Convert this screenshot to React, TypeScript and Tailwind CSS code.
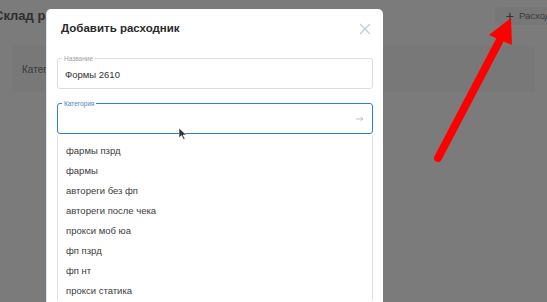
import React from "react";

const items = [
  "фармы пзрд",
  "фармы",
  "автореги без фп",
  "автореги после чека",
  "прокси моб юа",
  "фп пзрд",
  "фп нт",
  "прокси статика",
];

export default function App() {
  return (
    <div
      className="relative w-[547px] h-[302px] overflow-hidden bg-[#7b7b7b]"
      style={{ fontFamily: "'Liberation Sans', Arial, sans-serif" }}
    >
      {/* background page */}
      <div className="flex items-center justify-between h-[36px]">
        <div className="-ml-[6px] text-[13px] font-bold text-[#2f2f2f] mt-[-4px] whitespace-nowrap">Склад расходников</div>
        <div className="flex items-center gap-[5px] h-[18px] mt-[-4px] pl-[11px] pr-[4px] rounded-[3px] bg-[#777777] text-[9.5px] text-[#3a3a3a] -mr-[22px] whitespace-nowrap">
          <span className="text-[14px] leading-none text-[#333]">+</span>
          <span>Расходник</span>
        </div>
      </div>
      <div className="mx-[12px] mt-[10px] h-[46px] rounded-[3px] bg-[#787878] flex items-center pl-[10px] text-[10px] text-[#3a3a3a]">
        Категория
      </div>

      {/* modal */}
      <div className="absolute left-[46px] top-[9px] w-[337px] h-[300px] bg-white rounded-t-[5px] border-l border-[#dce6ee] px-[10px]">
        <div className="flex items-center justify-between h-[40px] pl-[4px] pr-[4px]">
          <div className="text-[11.5px] font-bold text-[#2a2a2a]">Добавить расходник</div>
          <svg width="12" height="12" viewBox="0 0 12 12" className="mr-[-2px]">
            <path d="M1 1L11 11M11 1L1 11" stroke="#b9cfe0" strokeWidth="1.3" />
          </svg>
        </div>

        <div className="relative mt-[9px] h-[31px] border border-[#dddddd] rounded-[3px] flex items-center pl-[7px]">
          <span className="absolute -top-[5px] left-[4px] bg-white px-[2px] text-[6.5px] leading-[9px] text-[#a0a0a0]">Название</span>
          <span className="text-[9.5px] text-[#333] mt-[3px]">Формы 2610</span>
        </div>

        <div className="relative mt-[14px] h-[31px] border-[1.5px] border-[#2f7fd8] rounded-[3px] flex items-center justify-end pr-[8px]">
          <span className="absolute -top-[5px] left-[4px] bg-white px-[2px] text-[6.5px] leading-[9px] text-[#4a86c6]">Категория</span>
          <svg width="8" height="6" viewBox="0 0 8 6">
            <path d="M0 3H7M4.5 1L7 3L4.5 5" stroke="#b8c4cf" strokeWidth="1" fill="none" />
          </svg>
        </div>

        <div className="mt-[2px] border-x border-[#e2e2e2] pt-[5px]">
          {items.map((t) => (
            <div key={t} className="h-[20px] flex items-center pl-[8px] text-[9.5px] text-[#3c3c3c]">
              {t}
            </div>
          ))}
        </div>

        {/* mouse cursor */}
        <svg className="absolute left-[132px] top-[119px]" width="8" height="12" viewBox="0 0 8 12">
          <path d="M0 0L0 10L2.5 7.5L4.5 11.5L6 10.8L4 7L7.5 7Z" fill="#333" stroke="#fff" strokeWidth="0.6" />
        </svg>
      </div>

      {/* red annotation arrow */}
      <svg className="absolute left-0 top-0" width="547" height="302" viewBox="0 0 547 302">
        <line x1="438" y1="158" x2="502" y2="36" stroke="#ff0000" strokeWidth="8" strokeLinecap="round" />
        <polygon points="511,18 489,35 512,45" fill="#ff0000" />
      </svg>
    </div>
  );
}
